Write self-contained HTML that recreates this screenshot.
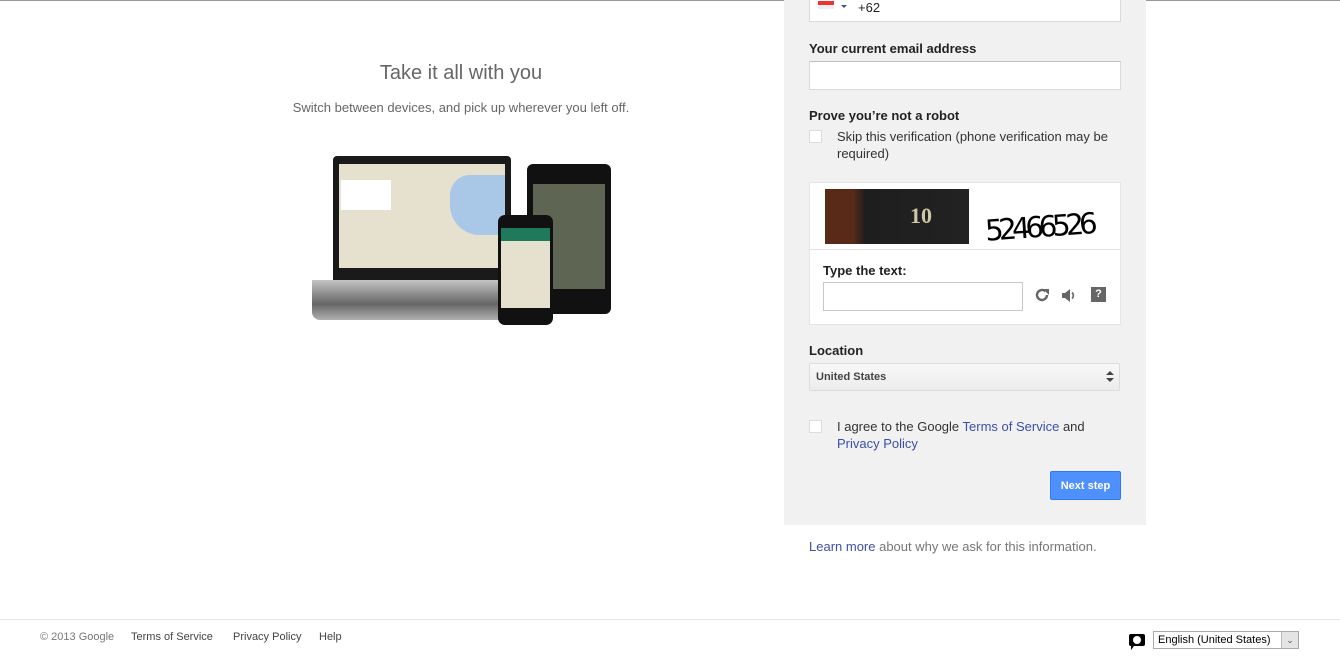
<!DOCTYPE html>
<html><head><meta charset="utf-8"><style>
*{box-sizing:border-box;margin:0;padding:0}
body{width:1340px;height:667px;overflow:hidden;background:#fff;font-family:"Liberation Sans",Arial,sans-serif;position:relative;font-size:13px;color:#222}
.abs{position:absolute}
.topline{left:0;top:0;width:1340px;height:1px;background:#999}
.panel{left:784px;top:0;width:362px;height:525px;background:#f1f1f1}
.inp{background:#fff;border:1px solid #d9d9d9;border-top-color:#c0c0c0}
.lbl{font-weight:bold;font-size:13px;color:#222}
.cb{width:13px;height:13px;border:1px solid #dcdcdc;background:#fff}
a,.lnk{color:#3c4fa8;text-decoration:none}
.btn{left:1050px;top:471px;width:71px;height:29px;background:#4d90fe;border:1px solid #3079ed;border-radius:2px;color:#fff;font-weight:bold;font-size:11px;text-align:center;line-height:29px}
.foot{font-size:11px;color:#444}
</style></head><body>
<div class="abs topline"></div>
<div class="abs" style="left:0;top:61px;width:922px;text-align:center;font-size:20px;color:#666;line-height:24px">Take it all with you</div>
<div class="abs" style="left:0;top:100px;width:922px;text-align:center;font-size:13px;color:#666;">Switch between devices, and pick up wherever you left off.</div>
<!-- devices -->
<div class="abs" style="left:333px;top:156px;width:178px;height:124px;background:#1a1a1a;border-radius:4px 4px 0 0"></div>
<div class="abs" style="left:339px;top:164px;width:166px;height:104px;background:#e6e1cf"></div>
<div class="abs" style="left:450px;top:175px;width:55px;height:60px;background:#a9c7e6;border-radius:20px 0 0 30px"></div>
<div class="abs" style="left:341px;top:180px;width:50px;height:30px;background:#fff"></div>
<div class="abs" style="left:312px;top:280px;width:200px;height:40px;background:linear-gradient(#c4c4c4,#666 60%,#b0b0b0);border-radius:0 0 8px 8px"></div>
<div class="abs" style="left:527px;top:164px;width:84px;height:150px;background:#111;border-radius:6px"></div>
<div class="abs" style="left:533px;top:184px;width:72px;height:105px;background:#5e6552"></div>
<div class="abs" style="left:498px;top:215px;width:55px;height:110px;background:#111;border-radius:7px"></div>
<div class="abs" style="left:501px;top:228px;width:49px;height:80px;background:#e6e1cf"></div>
<div class="abs" style="left:501px;top:228px;width:49px;height:13px;background:#1e7a5a"></div>
<!-- panel -->
<div class="abs panel"></div>
<div class="abs inp" style="left:809px;top:-5px;width:312px;height:27px"></div>
<div class="abs" style="left:818px;top:1px;width:16px;height:8px;background:linear-gradient(#e33 50%,#eee 50%)"></div>
<div class="abs" style="left:841px;top:5px;width:0;height:0;border:3px solid transparent;border-top-color:#3c4fa8"></div>
<div class="abs" style="left:858px;top:0px;font-size:13px;">+62</div>
<div class="abs lbl" style="left:809px;top:41px">Your current email address</div>
<div class="abs inp" style="left:809px;top:61px;width:312px;height:29px"></div>
<div class="abs lbl" style="left:809px;top:108px">Prove you’re not a robot</div>
<div class="abs cb" style="left:809px;top:130px"></div>
<div class="abs" style="left:837px;top:128px;width:275px;line-height:17px;color:#333">Skip this verification (phone verification may be required)</div>
<div class="abs" style="left:809px;top:182px;width:312px;height:143px;background:#fff;border:1px solid #e5e5e5"></div>
<div class="abs" style="left:810px;top:249px;width:310px;height:1px;background:#e5e5e5"></div>
<div class="abs" style="left:825px;top:189px;width:144px;height:55px;background:linear-gradient(90deg,#5a2a18 0,#5a2a18 28px,#1e1e1e 40px,#222 100%)"></div>
<div class="abs" style="left:910px;top:203px;font-family:'Liberation Serif',serif;font-weight:bold;font-size:22px;color:#cfc7a8">10</div>
<div class="abs" style="left:985px;top:210px;font-size:29px;letter-spacing:-5px;color:#000;transform:rotate(-4deg);font-family:'DejaVu Sans',sans-serif">52466526</div>
<div class="abs lbl" style="left:823px;top:263px">Type the text:</div>
<div class="abs inp" style="left:823px;top:282px;width:200px;height:29px;border-color:#c8c8c8"></div>
<svg class="abs" style="left:1034px;top:287px" width="16" height="16" viewBox="0 0 16 16"><path d="M13 8a5 5 0 1 1-1.5-3.6" fill="none" stroke="#666" stroke-width="2.4"/><path d="M9 2h6v6z" fill="#666"/></svg>
<svg class="abs" style="left:1061px;top:288px" width="16" height="15" viewBox="0 0 16 15"><path d="M1 5h3l5-4v13l-5-4H1z" fill="#666"/><path d="M11 4.5a4 4 0 0 1 0 6" fill="none" stroke="#666" stroke-width="1.6"/></svg>
<div class="abs" style="left:1091px;top:287px;width:15px;height:15px;background:#666;color:#fff;font-weight:bold;font-size:11px;text-align:center;line-height:15px">?</div>
<div class="abs lbl" style="left:809px;top:343px">Location</div>
<div class="abs" style="left:809px;top:363px;width:311px;height:28px;background:linear-gradient(#f8f8f8,#ececec);border:1px solid #dcdcdc;border-radius:2px"></div>
<div class="abs" style="left:816px;top:371px;font-size:11px;font-weight:bold;color:#444">United States</div>
<div class="abs" style="left:1106px;top:371px;width:0;height:0;border:4px solid transparent;border-bottom-color:#444;border-top:0"></div>
<div class="abs" style="left:1106px;top:378px;width:0;height:0;border:4px solid transparent;border-top-color:#444;border-bottom:0"></div>
<div class="abs cb" style="left:809px;top:420px"></div>
<div class="abs" style="left:837px;top:418px;width:270px;line-height:17px;color:#333">I agree to the Google <span class="lnk">Terms of Service</span> and <span class="lnk">Privacy Policy</span></div>
<div class="abs btn">Next step</div>
<div class="abs" style="left:809px;top:539px;color:#777"><span class="lnk">Learn more</span> about why we ask for this information.</div>
<!-- footer -->
<div class="abs" style="left:0;top:619px;width:1340px;height:1px;background:#e5e5e5"></div>
<div class="abs foot" style="left:40px;top:631px;color:#777">© 2013 Google</div>
<div class="abs foot" style="left:131px;top:631px">Terms of Service</div>
<div class="abs foot" style="left:233px;top:631px">Privacy Policy</div>
<div class="abs foot" style="left:319px;top:631px">Help</div>
<div class="abs" style="left:1129px;top:634px;width:16px;height:12px;background:#000;border-radius:2px"></div>
<div class="abs" style="left:1131px;top:646px;width:0;height:0;border-left:3px solid #000;border-bottom:4px solid transparent"></div>
<div class="abs" style="left:1133px;top:636px;width:8px;height:8px;border-radius:50%;background:#fff"></div>
<div class="abs" style="left:1153px;top:631px;width:146px;height:18px;border:1px solid #aaa;background:#fff"></div>
<div class="abs" style="left:1158px;top:634px;font-size:11px;color:#000">English (United States)</div>
<div class="abs" style="left:1281px;top:632px;width:17px;height:16px;background:#e4e4e4;border-left:1px solid #bbb;text-align:center;font-size:9px;line-height:16px;color:#555">⌄</div>
</body></html>
